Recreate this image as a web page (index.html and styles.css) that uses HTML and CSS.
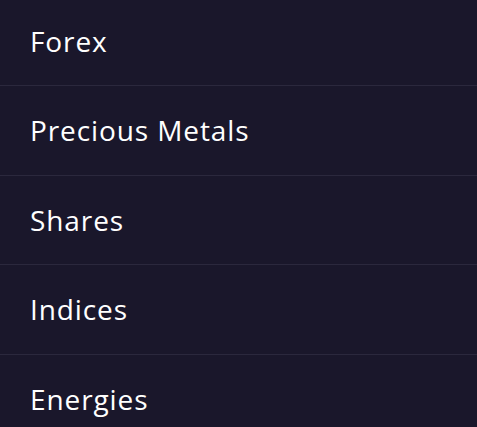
FILE: index.html
```html
<!DOCTYPE html>
<html>
<head>
<meta charset="utf-8">
<link rel="stylesheet" href="styles.css">
</head>
<body>
<ul class="menu">
  <li class="item">Forex</li>
  <li class="item">Precious Metals</li>
  <li class="item">Shares</li>
  <li class="item">Indices</li>
  <li class="item">Energies</li>
</ul>
</body>
</html>
```
FILE: styles.css
```css
html, body {
  margin: 0;
  padding: 0;
  background: #1a172b;
  height: 100%;
  overflow: hidden;
}
.menu {
  list-style: none;
  margin: -3.5px 0 0 0;
  padding: 0;
}
.item {
  height: 88.5px;
  box-sizing: content-box;
  display: flex;
  align-items: center;
  padding: 0 0 0 30px;
  border-bottom: 1px solid #2b283d;
  color: #ffffff;
  font-family: "Open Sans", "Noto Sans", sans-serif;
  font-size: 28px;
  letter-spacing: 0.9px;
}
```
